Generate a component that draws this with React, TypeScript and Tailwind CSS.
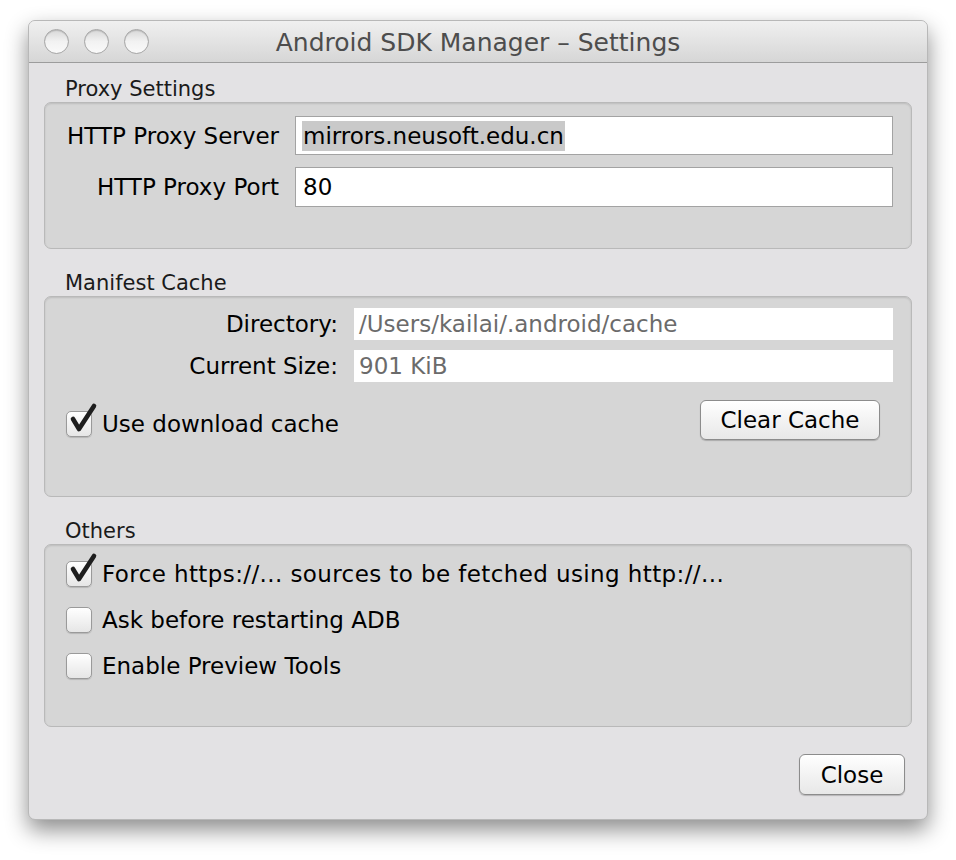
import React from "react";

const font = { fontFamily: '"DejaVu Sans", "Liberation Sans", sans-serif' };

function Check({ checked }: { checked: boolean }) {
  return (
    <div className="relative w-[26px] h-[26px] shrink-0">
      <div className="absolute inset-0 rounded-[5px] border border-[#9a9a9a] bg-gradient-to-b from-[#ffffff] to-[#e6e6e6] shadow-[0_1px_1px_rgba(0,0,0,0.15)]" />
      {checked && (
        <svg className="absolute left-[3px] top-[-7px] overflow-visible" width="28" height="32" viewBox="0 0 28 32">
          <path d="M4 15 L10 25 L25 2" fill="none" stroke="#1e1e1e" strokeWidth="4.6" strokeLinecap="round" strokeLinejoin="round" />
        </svg>
      )}
    </div>
  );
}

function Btn({ children, className }: { children: React.ReactNode; className: string }) {
  return (
    <div
      className={
        "flex items-center justify-center rounded-[6px] border border-[#8c8c8c] bg-gradient-to-b from-[#ffffff] via-[#f3f3f3] to-[#e8e8e8] text-[23px] leading-[26px] text-black shadow-[0_1px_1px_rgba(0,0,0,0.2)] " +
        className
      }
    >
      {children}
    </div>
  );
}

function Panel({ className, children }: { className: string; children?: React.ReactNode }) {
  return (
    <div
      className={
        "rounded-[7px] border border-[#b9b9b9] bg-[#d6d6d6] shadow-[inset_0_1px_2px_rgba(0,0,0,0.12)] " + className
      }
    >
      {children}
    </div>
  );
}

function Light() {
  return (
    <div className="w-[25px] h-[25px] rounded-full border border-[#a6a6a6] bg-gradient-to-b from-[#d8d8d8] via-[#f2f2f2] to-[#fafafa] shadow-[inset_0_1px_1px_rgba(0,0,0,0.15)]" />
  );
}

export default function App() {
  return (
    <div className="w-[956px] h-[860px] bg-white pl-[28px] pt-[20px]" style={font}>
      <div className="w-[900px] h-[800px] rounded-[7px] bg-[#e3e2e4] shadow-[0_10px_22px_rgba(0,0,0,0.45)] flex flex-col overflow-hidden border border-[#b8b8b8]">
        {/* Title bar */}
        <div className="relative h-[42px] shrink-0 bg-gradient-to-b from-[#f0f0f0] to-[#d6d6d6] border-b border-[#9c9c9c] flex items-center pl-[15px] gap-[15px]">
          <Light />
          <Light />
          <Light />
          <div className="absolute inset-0 flex items-center justify-center text-[25px] leading-[30px] text-[#4d4d4d] pt-[3px]">
            Android SDK Manager – Settings
          </div>
        </div>
        {/* Body */}
        <div className="flex-1 flex flex-col px-[15px] pt-[13px]">
          <div className="h-[26px] flex items-center pl-[21px] text-[21px] leading-[26px] text-[#1a1a1a]">Proxy Settings</div>
          <Panel className="h-[147px] pt-[13px] pr-[18px]">
            <div className="grid grid-cols-[234px_1fr] gap-x-[16px] gap-y-[12px] items-center text-[23px] leading-[26px]">
              <div className="text-right text-black">HTTP Proxy Server</div>
              <div className="h-[39px] bg-white border border-[#a3a3a3] flex items-center pl-[6px]">
                <span className="bg-[#c9c9c9] text-black px-[1px] leading-[30px]">mirrors.neusoft.edu.cn</span>
              </div>
              <div className="text-right text-black">HTTP Proxy Port</div>
              <div className="h-[40px] bg-white border border-[#a3a3a3] flex items-center pl-[7px] text-black">80</div>
            </div>
          </Panel>

          <div className="h-[26px] mt-[21px] flex items-center pl-[21px] text-[21px] leading-[26px] text-[#1a1a1a]">Manifest Cache</div>
          <Panel className="h-[201px] pt-[11px] pr-[18px]">
            <div className="grid grid-cols-[293px_1fr] gap-x-[16px] gap-y-[10px] items-center text-[23px] leading-[26px]">
              <div className="text-right text-black">Directory:</div>
              <div className="h-[32px] bg-white flex items-center pl-[5px] text-[#6b6b6b]">/Users/kailai/.android/cache</div>
              <div className="text-right text-black">Current Size:</div>
              <div className="h-[32px] bg-white flex items-center pl-[5px] text-[#6b6b6b]">901 KiB</div>
            </div>
            <div className="flex items-center justify-between pl-[21px] pr-[13px] mt-[18px]">
              <div className="flex items-center gap-[10px] mt-[8px]">
                <Check checked />
                <span className="text-[23px] leading-[26px] text-black">Use download cache</span>
              </div>
              <Btn className="w-[180px] h-[40px]">Clear Cache</Btn>
            </div>
          </Panel>

          <div className="h-[26px] mt-[21px] flex items-center pl-[21px] text-[21px] leading-[26px] text-[#1a1a1a]">Others</div>
          <Panel className="h-[183px] pt-[16px] pl-[21px]">
            <div className="flex flex-col gap-[20px] text-[23px] leading-[26px]">
              <div className="flex items-center gap-[10px]">
                <Check checked />
                <span className="text-black tracking-[0.4px]">Force https://... sources to be fetched using http://...</span>
              </div>
              <div className="flex items-center gap-[10px]">
                <Check checked={false} />
                <span className="text-black">Ask before restarting ADB</span>
              </div>
              <div className="flex items-center gap-[10px]">
                <Check checked={false} />
                <span className="text-black">Enable Preview Tools</span>
              </div>
            </div>
          </Panel>

          <div className="flex justify-end mt-[27px] pr-[7px]">
            <Btn className="w-[106px] h-[41px]">Close</Btn>
          </div>
        </div>
      </div>
    </div>
  );
}
